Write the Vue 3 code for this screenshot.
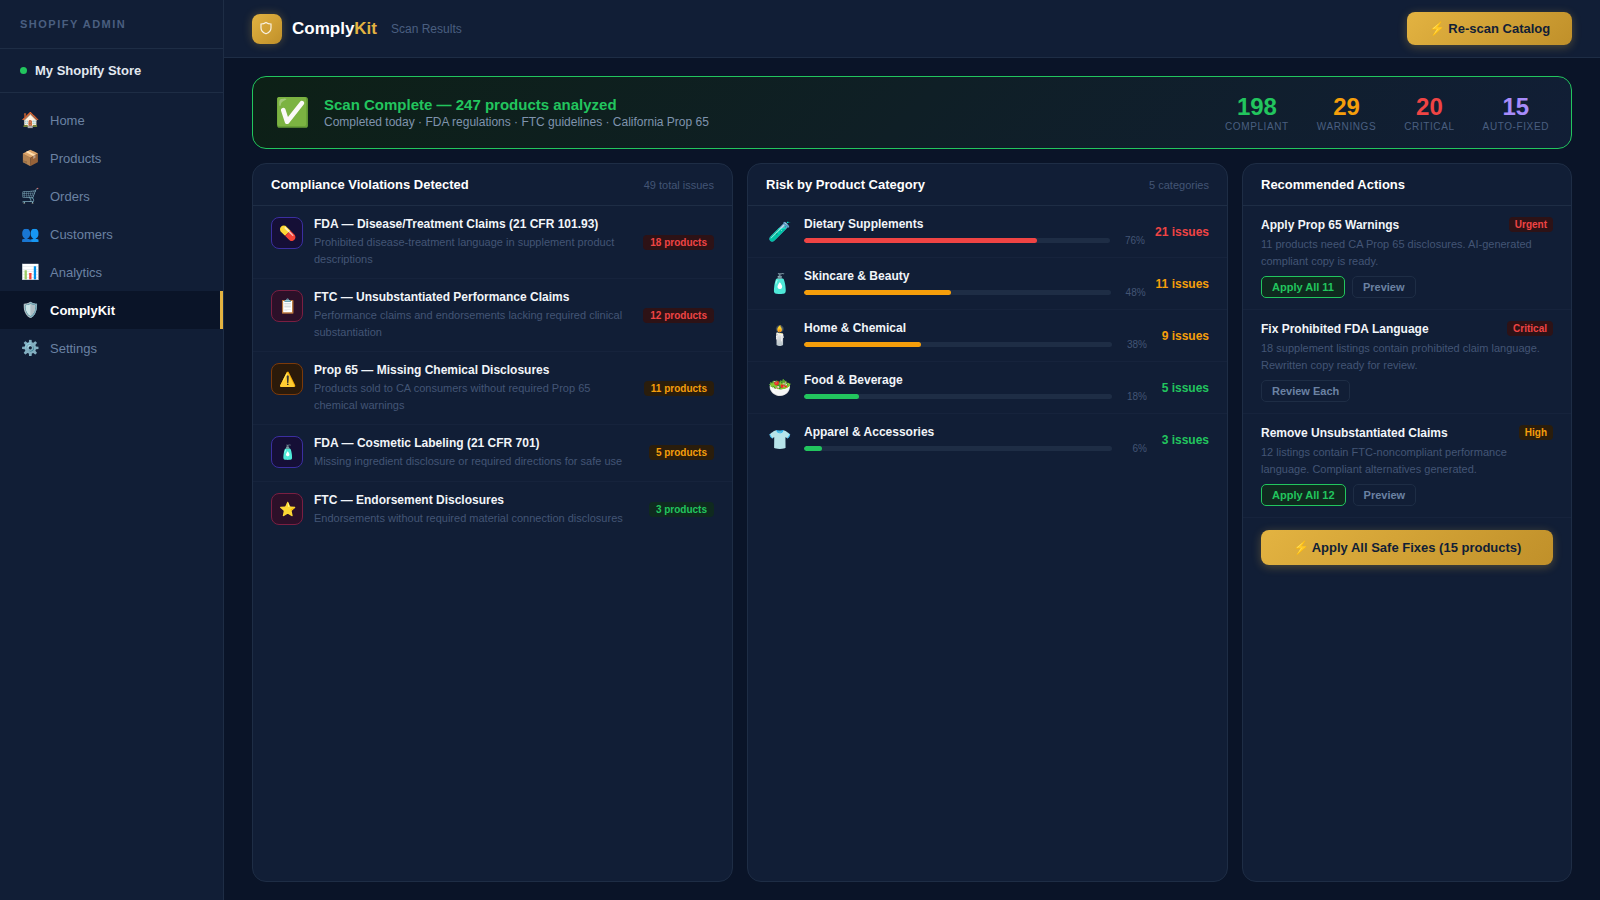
<template>
	<div class="app-shell">
		<!-- Sidebar -->
		<aside class="sidebar">
			<div class="sidebar-label">SHOPIFY ADMIN</div>
			<div class="store-row">
				<span class="store-dot"></span>
				<span class="store-name">My Shopify Store</span>
			</div>
			<nav class="nav-list">
				<div
					v-for="item in navItems"
					:key="item.label"
					class="nav-item"
					:class="{ active: item.active }"
				>
					<span class="nav-icon">{{ item.icon }}</span>
					<span>{{ item.label }}</span>
				</div>
			</nav>
		</aside>

		<div class="main">
			<!-- Top bar -->
			<header class="topbar">
				<div class="brand">
					<div class="brand-icon">
						<svg class="shield-icon" viewBox="0 0 14 14" fill="none" stroke="currentColor" stroke-width="1.2">
							<path d="M7 1.500C5.500 2.600 3.800 3 2 3v4c0 3 2.500 4.800 5 5.800 2.500-1 5-2.800 5-5.800V3c-1.800 0-3.500-.4-5-1.500z"/>
						</svg>
					</div>
					<div class="brand-name">Comply<span class="brand-accent">Kit</span></div>
					<div class="brand-sub">Scan Results</div>
				</div>
				<button class="gold-btn rescan-btn">⚡ Re-scan Catalog</button>
			</header>

			<div class="content">
				<!-- Scan banner -->
				<section class="banner">
					<div class="banner-left">
						<span class="banner-icon">✅</span>
						<div>
							<div class="banner-title">Scan Complete — 247 products analyzed</div>
							<div class="banner-sub">Completed today · FDA regulations · FTC guidelines · California Prop 65</div>
						</div>
					</div>
					<div class="stats">
						<div v-for="stat in stats" :key="stat.label" class="stat">
							<div class="stat-value" :class="stat.tone">{{ stat.value }}</div>
							<div class="stat-label">{{ stat.label }}</div>
						</div>
					</div>
				</section>

				<div class="columns">
					<!-- Violations -->
					<section class="card">
						<div class="card-head">
							<span class="card-title">Compliance Violations Detected</span>
							<span class="card-meta">49 total issues</span>
						</div>
						<div v-for="v in violations" :key="v.title" class="violation-row">
							<div class="violation-icon" :class="v.iconTone">{{ v.icon }}</div>
							<div class="violation-body">
								<div class="row-title">{{ v.title }}</div>
								<div class="row-desc">{{ v.desc }}</div>
							</div>
							<span class="badge violation-badge" :class="v.tone">{{ v.count }} products</span>
						</div>
					</section>

					<!-- Risk by category -->
					<section class="card">
						<div class="card-head">
							<span class="card-title">Risk by Product Category</span>
							<span class="card-meta">5 categories</span>
						</div>
						<div v-for="c in categories" :key="c.name" class="category-row">
							<div class="category-icon">{{ c.icon }}</div>
							<div class="category-info">
								<div class="row-title">{{ c.name }}</div>
								<div class="bar-track">
									<div class="bar-fill" :class="'fill-' + c.tone" :style="{ width: c.pct + '%' }"></div>
								</div>
							</div>
							<div class="category-pct">{{ c.pct }}%</div>
							<div class="category-issues" :class="c.tone">{{ c.issues }} issues</div>
						</div>
					</section>

					<!-- Actions -->
					<section class="card">
						<div class="card-head">
							<span class="card-title">Recommended Actions</span>
						</div>
						<div v-for="a in actions" :key="a.title" class="action-row">
							<div class="action-top">
								<span class="row-title">{{ a.title }}</span>
								<span class="badge action-badge" :class="a.tone">{{ a.level }}</span>
							</div>
							<div class="row-desc action-desc">{{ a.desc }}</div>
							<div class="action-buttons">
								<button v-if="a.apply" class="small-btn small-btn-apply">{{ a.apply }}</button>
								<button class="small-btn">{{ a.secondary }}</button>
							</div>
						</div>
						<div class="apply-wrap">
							<button class="gold-btn apply-btn">⚡ Apply All Safe Fixes (15 products)</button>
						</div>
					</section>
				</div>
			</div>
		</div>
	</div>
</template>

<script setup>
const navItems = [
	{ icon: '🏠', label: 'Home' },
	{ icon: '📦', label: 'Products' },
	{ icon: '🛒', label: 'Orders' },
	{ icon: '👥', label: 'Customers' },
	{ icon: '📊', label: 'Analytics' },
	{ icon: '🛡️', label: 'ComplyKit', active: true },
	{ icon: '⚙️', label: 'Settings' }
]

const stats = [
	{ value: 198, label: 'Compliant', tone: 'green' },
	{ value: 29, label: 'Warnings', tone: 'orange' },
	{ value: 20, label: 'Critical', tone: 'red' },
	{ value: 15, label: 'Auto-Fixed', tone: 'purple' }
]

const violations = [
	{
		icon: '💊',
		iconTone: 'icon-purple',
		title: 'FDA — Disease/Treatment Claims (21 CFR 101.93)',
		desc: 'Prohibited disease-treatment language in supplement product descriptions',
		count: 18,
		tone: 'red'
	},
	{
		icon: '📋',
		iconTone: 'icon-red',
		title: 'FTC — Unsubstantiated Performance Claims',
		desc: 'Performance claims and endorsements lacking required clinical substantiation',
		count: 12,
		tone: 'red'
	},
	{
		icon: '⚠️',
		iconTone: 'icon-orange',
		title: 'Prop 65 — Missing Chemical Disclosures',
		desc: 'Products sold to CA consumers without required Prop 65 chemical warnings',
		count: 11,
		tone: 'orange'
	},
	{
		icon: '🧴',
		iconTone: 'icon-purple',
		title: 'FDA — Cosmetic Labeling (21 CFR 701)',
		desc: 'Missing ingredient disclosure or required directions for safe use',
		count: 5,
		tone: 'orange'
	},
	{
		icon: '⭐',
		iconTone: 'icon-red',
		title: 'FTC — Endorsement Disclosures',
		desc: 'Endorsements without required material connection disclosures',
		count: 3,
		tone: 'green'
	}
]

const categories = [
	{ icon: '🧪', name: 'Dietary Supplements', pct: 76, issues: 21, tone: 'red' },
	{ icon: '🧴', name: 'Skincare & Beauty', pct: 48, issues: 11, tone: 'orange' },
	{ icon: '🕯️', name: 'Home & Chemical', pct: 38, issues: 9, tone: 'orange' },
	{ icon: '🥗', name: 'Food & Beverage', pct: 18, issues: 5, tone: 'green' },
	{ icon: '👕', name: 'Apparel & Accessories', pct: 6, issues: 3, tone: 'green' }
]

const actions = [
	{
		title: 'Apply Prop 65 Warnings',
		level: 'Urgent',
		tone: 'red',
		desc: '11 products need CA Prop 65 disclosures. AI-generated compliant copy is ready.',
		apply: 'Apply All 11',
		secondary: 'Preview'
	},
	{
		title: 'Fix Prohibited FDA Language',
		level: 'Critical',
		tone: 'red',
		desc: '18 supplement listings contain prohibited claim language. Rewritten copy ready for review.',
		secondary: 'Review Each'
	},
	{
		title: 'Remove Unsubstantiated Claims',
		level: 'High',
		tone: 'orange',
		desc: '12 listings contain FTC-noncompliant performance language. Compliant alternatives generated.',
		apply: 'Apply All 12',
		secondary: 'Preview'
	}
]
</script>

<style>
html,
body {
	margin: 0;
	background: #0a1428;
}
</style>

<style scoped>
.app-shell {
	display: flex;
	height: 900px;
	overflow: hidden;
	background: #0a1428;
	color: #fff;
	font-family: "Liberation Sans", Arial, sans-serif;
}

/* Sidebar */
.sidebar {
	width: 224px;
	flex: none;
	box-sizing: border-box;
	background: #111e36;
	border-right: 1px solid #1e2d45;
}

.sidebar-label {
	height: 49px;
	box-sizing: border-box;
	padding-top: 18px;
	padding-left: 20px;
	font-size: 11px;
	font-weight: 700;
	letter-spacing: 1.5px;
	color: #4a5f80;
	border-bottom: 1px solid #1e2d45;
}

.store-row {
	display: flex;
	align-items: center;
	gap: 8px;
	height: 43px;
	padding-left: 20px;
	border-bottom: 1px solid #1e2d45;
}

.store-dot {
	width: 7px;
	height: 7px;
	border-radius: 50%;
	background: #22c55e;
}

.store-name {
	font-size: 13px;
	font-weight: 700;
	color: #e2e8f0;
}

.nav-list {
	padding-top: 8px;
}

.nav-item {
	display: flex;
	align-items: center;
	gap: 10px;
	height: 38px;
	padding-left: 20px;
	font-size: 13px;
	color: #6b82a3;
}

.nav-item.active {
	background: #0a1428;
	color: #fff;
	font-weight: 700;
	border-right: 3px solid #e3b341;
}

.nav-icon {
	width: 20px;
	text-align: center;
	font-size: 15px;
}

/* Top bar */
.main {
	flex: 1;
	min-width: 0;
	display: flex;
	flex-direction: column;
}

.topbar {
	height: 58px;
	flex: none;
	box-sizing: border-box;
	display: flex;
	align-items: center;
	justify-content: space-between;
	padding: 0 28px;
	background: #111e36;
	border-bottom: 1px solid #1e2d45;
}

.brand {
	display: flex;
	align-items: center;
}

.brand-icon {
	width: 30px;
	height: 30px;
	display: flex;
	align-items: center;
	justify-content: center;
	border-radius: 8px;
	background: linear-gradient(135deg, #e3b341, #c0902a);
	box-shadow: 0 0 10px rgba(227, 179, 65, 0.3);
	color: rgba(255, 255, 255, 0.85);
	margin-right: 10px;
}

.shield-icon {
	width: 14px;
	height: 14px;
	margin: 0 2px 2px 0;
}

.brand-name {
	font-size: 17px;
	font-weight: 700;
	margin-right: 14px;
}

.brand-accent {
	color: #e3b341;
}

.brand-sub {
	font-size: 12px;
	color: #4a5f80;
}

.gold-btn {
	border: none;
	font-family: inherit;
	font-weight: 700;
	color: #111e36;
	background: linear-gradient(135deg, #e3b341, #c0902a);
	box-shadow: 0 2px 10px rgba(227, 179, 65, 0.3);
}

.rescan-btn {
	width: 165px;
	height: 33px;
	border-radius: 8px;
	font-size: 13px;
}

/* Content */
.content {
	flex: 1;
	min-height: 0;
	display: flex;
	flex-direction: column;
	gap: 14px;
	padding: 18px 28px;
}

.banner {
	height: 73px;
	flex: none;
	box-sizing: border-box;
	display: flex;
	align-items: center;
	justify-content: space-between;
	padding: 0 22px;
	border: 1px solid #22c55e;
	border-radius: 14px;
	background: linear-gradient(135deg, #0d2016 0%, #111e36 100%);
}

.banner-left {
	display: flex;
	align-items: center;
	gap: 14px;
}

.banner-icon {
	font-size: 28px;
}

.banner-title {
	font-size: 15px;
	font-weight: 700;
	color: #22c55e;
}

.banner-sub {
	font-size: 12px;
	color: #7f93ad;
	margin-top: 2px;
}

.stats {
	display: flex;
	gap: 28px;
}

.stat {
	text-align: center;
}

.stat-value {
	font-size: 24px;
	font-weight: 700;
	line-height: 28px;
}

.stat-label {
	font-size: 10px;
	letter-spacing: 0.6px;
	text-transform: uppercase;
	color: #4a5f80;
}

.green { color: #22c55e; }
.orange { color: #f59e0b; }
.red { color: #ef4444; }
.purple { color: #a78bfa; }

/* Cards */
.columns {
	flex: 1;
	min-height: 0;
	display: grid;
	grid-template-columns: 1fr 1fr 330px;
	gap: 14px;
}

.card {
	box-sizing: border-box;
	background: #111e36;
	border: 1px solid #1e2d45;
	border-radius: 14px;
	overflow: hidden;
}

.card-head {
	height: 42px;
	box-sizing: border-box;
	display: flex;
	align-items: center;
	justify-content: space-between;
	padding: 0 18px;
	border-bottom: 1px solid #1e2d45;
}

.card-title {
	font-size: 13px;
	font-weight: 700;
}

.card-meta {
	font-size: 11px;
	color: #435575;
}

.row-title {
	font-size: 12px;
	font-weight: 700;
	color: #f1f5f9;
}

.row-desc {
	font-size: 11px;
	line-height: 16.5px;
	color: #435575;
}

/* Violations */
.violation-row {
	display: flex;
	align-items: flex-start;
	padding: 11px 18px;
	border-bottom: 1px solid #16233c;
}

.violation-row:last-child {
	border-bottom: none;
}

.violation-icon {
	width: 32px;
	height: 32px;
	flex: none;
	box-sizing: border-box;
	display: flex;
	align-items: center;
	justify-content: center;
	border-radius: 8px;
	border: 1px solid;
	font-size: 14px;
	margin-right: 11px;
}

.icon-purple {
	background: #150f36;
	border-color: #3b2fa0;
}

.icon-red {
	background: #2c1029;
	border-color: #7a1f42;
}

.icon-orange {
	background: #2b1a0a;
	border-color: #7c3a0a;
}

.violation-body {
	flex: 1;
	min-width: 0;
	margin-right: 20px;
}

.violation-body .row-title {
	margin-bottom: 3px;
}

.badge {
	flex: none;
	font-size: 10px;
	font-weight: 700;
	line-height: 11px;
	padding: 2px 7px;
	border-radius: 4px;
}

.badge.red { background: #2d1216; }
.badge.orange { background: #2a1d0c; }
.badge.green { background: #0f2a1f; }

.violation-badge {
	align-self: center;
}

/* Categories */
.category-row {
	display: flex;
	align-items: center;
	gap: 10px;
	padding: 11px 18px;
	border-bottom: 1px solid #16233c;
}

.category-row:last-child {
	border-bottom: none;
}

.category-icon {
	width: 28px;
	flex: none;
	text-align: center;
	font-size: 19px;
}

.category-info {
	flex: 1;
	min-width: 0;
	padding-bottom: 3px;
}

.bar-track {
	height: 5px;
	margin-top: 7px;
	border-radius: 3px;
	background: #1e2d45;
	overflow: hidden;
}

.bar-fill {
	height: 100%;
	border-radius: 3px;
}

.fill-red { background: #ef4444; }
.fill-orange { background: #f59e0b; }
.fill-green { background: #22c55e; }

.category-pct {
	width: 25px;
	flex: none;
	align-self: flex-end;
	text-align: right;
	font-size: 10px;
	color: #435575;
}

.category-issues {
	min-width: 52px;
	flex: none;
	text-align: right;
	font-size: 12px;
	font-weight: 700;
}

/* Actions */
.action-row {
	padding: 11px 18px;
	border-bottom: 1px solid #16233c;
}

.action-top {
	display: flex;
	align-items: center;
	justify-content: space-between;
}

.action-badge {
	padding: 2px 6px;
}

.action-desc {
	margin-top: 4px;
}

.action-buttons {
	display: flex;
	gap: 7px;
	margin-top: 7px;
}

.small-btn {
	height: 22px;
	box-sizing: border-box;
	padding: 0 10px;
	font-family: inherit;
	font-size: 11px;
	font-weight: 700;
	color: #6b82a3;
	background: transparent;
	border: 1px solid #1e2d45;
	border-radius: 5px;
}

.small-btn-apply {
	color: #22c55e;
	background: #0f2a1f;
	border-color: #22c55e;
}

.apply-wrap {
	padding: 12px 18px;
}

.apply-btn {
	width: 100%;
	height: 35px;
	border-radius: 8px;
	font-size: 13px;
}
</style>
